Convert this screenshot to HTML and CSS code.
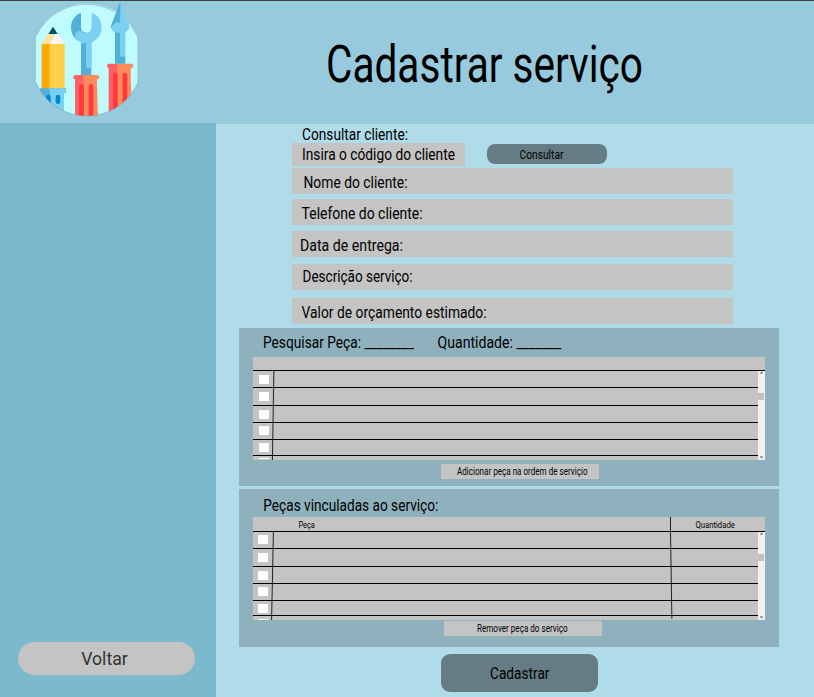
FILE: index.html
```html
<!DOCTYPE html>
<html lang="pt-BR">
<head>
<meta charset="utf-8">
<title>Cadastrar serviço</title>
<link rel="stylesheet" href="styles.css">
</head>
<body>
<div class="app">
  <header class="header">
    <svg class="logo" width="140" height="122" viewBox="0 3 420 366">
      <defs>
        <clipPath id="disc"><path d="M48 109A167 167 0 0 1 354 112V247A167 167 0 0 1 48 249Z"/></clipPath>
      </defs>
      <g clip-path="url(#disc)">
        <path fill="#bffbff" d="M0 0H420V390H0Z"/>
        <path fill="#ffa900" d="M65 131H90V266H65Z"/>
        <path fill="#ffd04a" d="M89 131H134V266H89Z"/>
        <path fill="#ffe29f" d="M65 132L86 99H104L91 132Z"/>
        <path fill="#fff3f2" d="M90 132L110 99L134 132Z"/>
        <path fill="#00506b" d="M85 102L99 80L113 102Z"/>
        <path fill="#50b0d8" d="M59 265H138V278H132V350H59Z"/>
        <path fill="#7bd0f2" d="M84 265H132Q138 265 138 271Q138 278 132 278V350H91V281Q91 270 84 265Z"/>
        <rect fill="#0088d0" x="78" y="284" width="14" height="29" rx="7"/>
        <rect fill="#0088d0" x="107" y="284" width="14" height="28" rx="7"/>
        <path fill="#50b0d8" d="M183 38V82Q184 98 200 98V128H214V226H183V126C164 119 153 103 153 82C153 62 165 45 183 38Z"/>
        <path fill="#7bd0f2" d="M215 38C234 45 245 62 245 82C245 103 233 119 214 128V197Q214 205 206 205Q198 205 198 197V130H183V126C174 122 168 117 165 111C165 97 174 91 184 92C194 104 215 98 215 80Z"/>
        <path fill="#ff5f65" d="M166 225H200V350H165V238Q160 238 160 231Q160 225 166 225Z"/>
        <path fill="#ff8a5b" d="M187 225H232Q238 225 238 231Q238 238 232 238Q230 242 231 252L234 350H190V245Q192 232 187 225Z"/>
        <path fill="#ff3a3d" d="M177 350V260Q177 252 184 252Q192 252 192 260V350ZM206 350V260Q206 252 213 252Q220 252 220 260V350Z"/>
        <path fill="#ff5f65" d="M268 191H303V350H266V204Q261 204 261 198Q261 191 268 191Z"/>
        <path fill="#ff8a5b" d="M290 191H334Q340 191 340 198Q340 204 334 204Q331 209 332 219L336 350H292V211Q294 198 290 191Z"/>
        <path fill="#ff3a3d" d="M279 350V226Q279 218 286 218Q293 218 293 226V350ZM308 350V226Q308 218 315 218Q322 218 322 226V350Z"/>
      </g>
      <path fill="none" stroke="#6f9bab" stroke-width="1.5" d="M48 109A167 167 0 0 1 282 35M325 64L354 112V247A167 167 0 0 1 48 249"/>
      <path fill="#7bd0f2" d="M301 5L329 80Q325 92 316 97V162Q316 170 309 170Q301 170 301 162Z"/>
      <path fill="#50b0d8" d="M300 5L272 80Q276 92 285 96V191H316V165Q315 170 309 170Q301 170 301 162V5Z"/>
      <path fill="#7bd0f2" d="M274 86C278 67 296 60 303 74V98H286Q278 94 274 86Z"/>
    </svg>
    <h1 class="title"><svg class="text" width="317" height="60"><text x="0" y="46.6" textLength="317" lengthAdjust="spacingAndGlyphs">Cadastrar serviço</text></svg></h1>
  </header>
  <div class="body">
    <nav class="sidebar"><button class="back">Voltar</button></nav>
    <main class="main">
      <section class="form">
        <div class="caption"><svg class="text" width="106" height="20"><text y="15" textLength="106" lengthAdjust="spacingAndGlyphs">Consultar cliente:</text></svg></div>
        <div class="search">
          <div class="code"><svg class="text" width="153" height="20"><text y="15" textLength="153" lengthAdjust="spacingAndGlyphs">Insira o código do cliente</text></svg></div>
          <button class="consult"><svg class="text" width="44" height="16"><text x=".5" y="13" textLength="44" lengthAdjust="spacingAndGlyphs">Consultar</text></svg></button>
        </div>
        <div class="field name"><svg class="text" width="104" height="20"><text x=".5" y="15" textLength="104" lengthAdjust="spacingAndGlyphs">Nome do cliente:</text></svg></div>
        <div class="field phone"><svg class="text" width="121" height="20"><text x="-.4" y="15" textLength="121" lengthAdjust="spacingAndGlyphs">Telefone do cliente:</text></svg></div>
        <div class="field date"><svg class="text" width="103" height="20"><text y="15" textLength="103" lengthAdjust="spacingAndGlyphs">Data de entrega:</text></svg></div>
        <div class="field desc"><svg class="text" width="110" height="20"><text x=".6" y="15" textLength="110" lengthAdjust="spacingAndGlyphs">Descrição serviço:</text></svg></div>
        <div class="field value"><svg class="text" width="185" height="20"><text x="-.4" y="15" textLength="185" lengthAdjust="spacingAndGlyphs">Valor de orçamento estimado:</text></svg></div>
      </section>

      <section class="panel">
        <div class="panel-head">
          <svg class="text" width="151" height="20"><text y="14.3" textLength="151" lengthAdjust="spacingAndGlyphs">Pesquisar Peça: ________</text></svg>
          <svg class="text" width="124" height="20"><text x=".5" y="14.3" textLength="123.5" lengthAdjust="spacingAndGlyphs">Quantidade: _______</text></svg>
        </div>
        <div class="table parts">
          <div class="thead"></div>
          <div class="tbody">
            <div class="rows">
              <div class="row"><i class="check"></i></div>
              <div class="row"><i class="check"></i></div>
              <div class="row"><i class="check"></i></div>
              <div class="row"><i class="check"></i></div>
              <div class="row"><i class="check"></i></div>
              <div class="row"><i class="check"></i></div>
            </div>
            <div class="scroll"><svg width="7" height="3"><path d="M2 2.5L3.5 .5L5 2.5Z"/></svg><i class="thumb"></i><svg class="down" width="7" height="3"><path d="M2 .5L3.5 2.5L5 .5Z"/></svg></div>
          </div>
          <svg class="rules" width="512" height="103"><path d="M20.9 14L19.4 103"/></svg>
        </div>
        <button class="action add"><svg class="text" width="131" height="14"><text y="11" textLength="130.5" lengthAdjust="spacingAndGlyphs">Adicionar peça na ordem de serviçio</text></svg></button>
      </section>

      <section class="panel linked">
        <div class="panel-head"><svg class="text" width="175" height="20"><text x=".3" y="15" textLength="175" lengthAdjust="spacingAndGlyphs">Peças vinculadas ao serviço:</text></svg></div>
        <div class="table">
          <div class="thead">
            <svg class="text" width="17" height="14"><text x=".4" y="11" textLength="16.5" lengthAdjust="spacingAndGlyphs">Peça</text></svg>
            <svg class="text" width="40" height="14"><text x=".4" y="11" textLength="39.5" lengthAdjust="spacingAndGlyphs">Quantidade</text></svg>
          </div>
          <div class="tbody">
            <div class="rows">
              <div class="row"><i class="check"></i></div>
              <div class="row"><i class="check"></i></div>
              <div class="row"><i class="check"></i></div>
              <div class="row"><i class="check"></i></div>
              <div class="row"><i class="check"></i></div>
              <div class="row"><i class="check"></i></div>
            </div>
            <div class="scroll"><svg width="7" height="3"><path d="M2 2.5L3.5 .5L5 2.5Z"/></svg><i class="thumb"></i><svg class="down" width="7" height="3"><path d="M2 .5L3.5 2.5L5 .5Z"/></svg></div>
          </div>
          <svg class="rules" width="512" height="103"><path d="M20.4 15L18.6 103M417.5 0V15L418.9 102"/></svg>
        </div>
        <button class="action remove"><svg class="text" width="91" height="14"><text y="11" textLength="90.5" lengthAdjust="spacingAndGlyphs">Remover peça do serviço</text></svg></button>
      </section>
      <button class="submit"><svg class="text" width="60" height="22"><text y="17" textLength="59.5" lengthAdjust="spacingAndGlyphs">Cadastrar</text></svg></button>
    </main>
  </div>
</div>
</body>
</html>
```
FILE: styles.css
```css
* { box-sizing: border-box; }

body {
  margin: 0;
  font-family: Roboto, "Liberation Sans", sans-serif;
  color: #000;
}

button {
  display: block;
  border: 0;
  padding: 0;
  font-family: inherit;
}

svg { display: block; flex: none; }

.app {
  width: 814px;
  height: 697px;
  overflow: hidden;
  display: flex;
  flex-direction: column;
  background: #b0dce9;
}

.header {
  display: flex;
  flex: none;
  height: 123px;
  border-top: 1px solid #3d4145;
  background: #97cadd;
}

.logo { margin-left: 20px; }

.title {
  margin: 34px 0 0 166px;
  font-weight: 400;
}

.text { overflow: visible; font-size: 17.3px; }
.title .text { font-size: 52.5px; }

.body { display: flex; flex: 1; }

.sidebar {
  display: flex;
  align-items: flex-end;
  width: 216px;
  padding: 0 0 22px 18px;
  background: #7abacc;
}

.back {
  width: 177px;
  height: 33px;
  padding-right: 4px;
  border-radius: 17px;
  background: #c4c4c4;
  color: #333;
  font-size: 17.7px;
}

.main {
  flex: 1;
  padding-left: 23px;
  border-top: 1px solid #97cadd;
}

.form { width: 441px; margin-left: 53px; }
.caption { height: 19px; padding: 1px 0 0 10px; }
.search { display: flex; height: 23px; }
.code { width: 173px; padding: 2px 0 0 10px; background: #c4c4c4; }

.consult {
  width: 120px;
  height: 20px;
  margin: 1px 0 0 22px;
  padding: 0 0 0 32px;
  border-radius: 8px;
  background: #667c84;
}
.consult .text { font-size: 12.5px; }

.field { height: 26px; background: #c4c4c4; }
.name { margin-top: 2px; padding: 5px 0 0 11px; }
.phone { margin-top: 5px; padding: 5px 0 0 10px; }
.date { margin-top: 6px; padding: 5px 0 0 8px; }
.desc { margin-top: 7px; padding: 3px 0 0 10px; }
.value { margin-top: 8px; padding: 5px 0 0 10px; }

.panel {
  width: 540px;
  height: 158px;
  margin-top: 4px;
  padding: 0 14px;
  background: #8eb1bd;
}
.linked { margin-top: 3px; }

.panel-head { display: flex; gap: 23px; height: 29px; padding: 6px 0 0 10px; }
.linked .panel-head { height: 28px; padding-top: 7px; }

.table { position: relative; width: 512px; height: 103px; background: #c4c4c4; }

.thead {
  display: flex;
  justify-content: space-between;
  height: 15px;
  padding: 0 30px 0 45px;
  border-bottom: 1px solid #000;
}
.thead .text { font-size: 9.7px; }
.parts .thead { height: 14px; }

.tbody { display: flex; }

.rows {
  display: grid;
  flex: 1;
  grid-template-rows: 17px 18px 17px 17px 15px 5px;
  height: 88px;
  overflow: hidden;
}
.parts .rows { grid-template-rows: 17px 18px 17px 17px 16px 4px; }

.row {
  padding: 4px 0 0 5px;
  border-bottom: 1px solid #000;
  overflow: hidden;
}
.linked .row:first-child { padding-top: 3px; }
.parts .row { padding-left: 6px; }
.row:nth-child(n+4) { padding-top: 3px; }
.row:last-child { border-bottom: 0; }
.parts .row:last-child { padding-top: 2px; }
.parts .row:last-child { border-bottom: 1px solid #8eb1bd; }

.check { display: block; width: 10px; height: 9px; background: #fff; }

.scroll {
  display: flex;
  flex-direction: column;
  width: 7px;
  height: 88px;
  background: #f1f0f0;
  fill: #555;
}
.parts .scroll { height: 89px; }
.thumb { width: 6px; height: 7px; margin-top: 19px; background: #c1c1c1; }
.down { margin-top: auto; margin-bottom: 1px; }

.rules {
  position: absolute;
  inset: 0;
  fill: none;
  stroke: #222;
  stroke-width: 1;
}

.action { width: 158px; height: 15px; background: #c4c4c4; }
.action .text { font-size: 10.2px; }
.add { margin: 4px 0 0 188px; padding: 0 0 1px 16px; }
.remove { margin: 1px 0 0 191px; padding: 0 0 1px 33px; }

.submit {
  width: 157px;
  height: 38px;
  margin: 7px 0 0 202px;
  padding: 0 0 0 49px;
  border-radius: 9px;
  background: #667c84;
}
```
